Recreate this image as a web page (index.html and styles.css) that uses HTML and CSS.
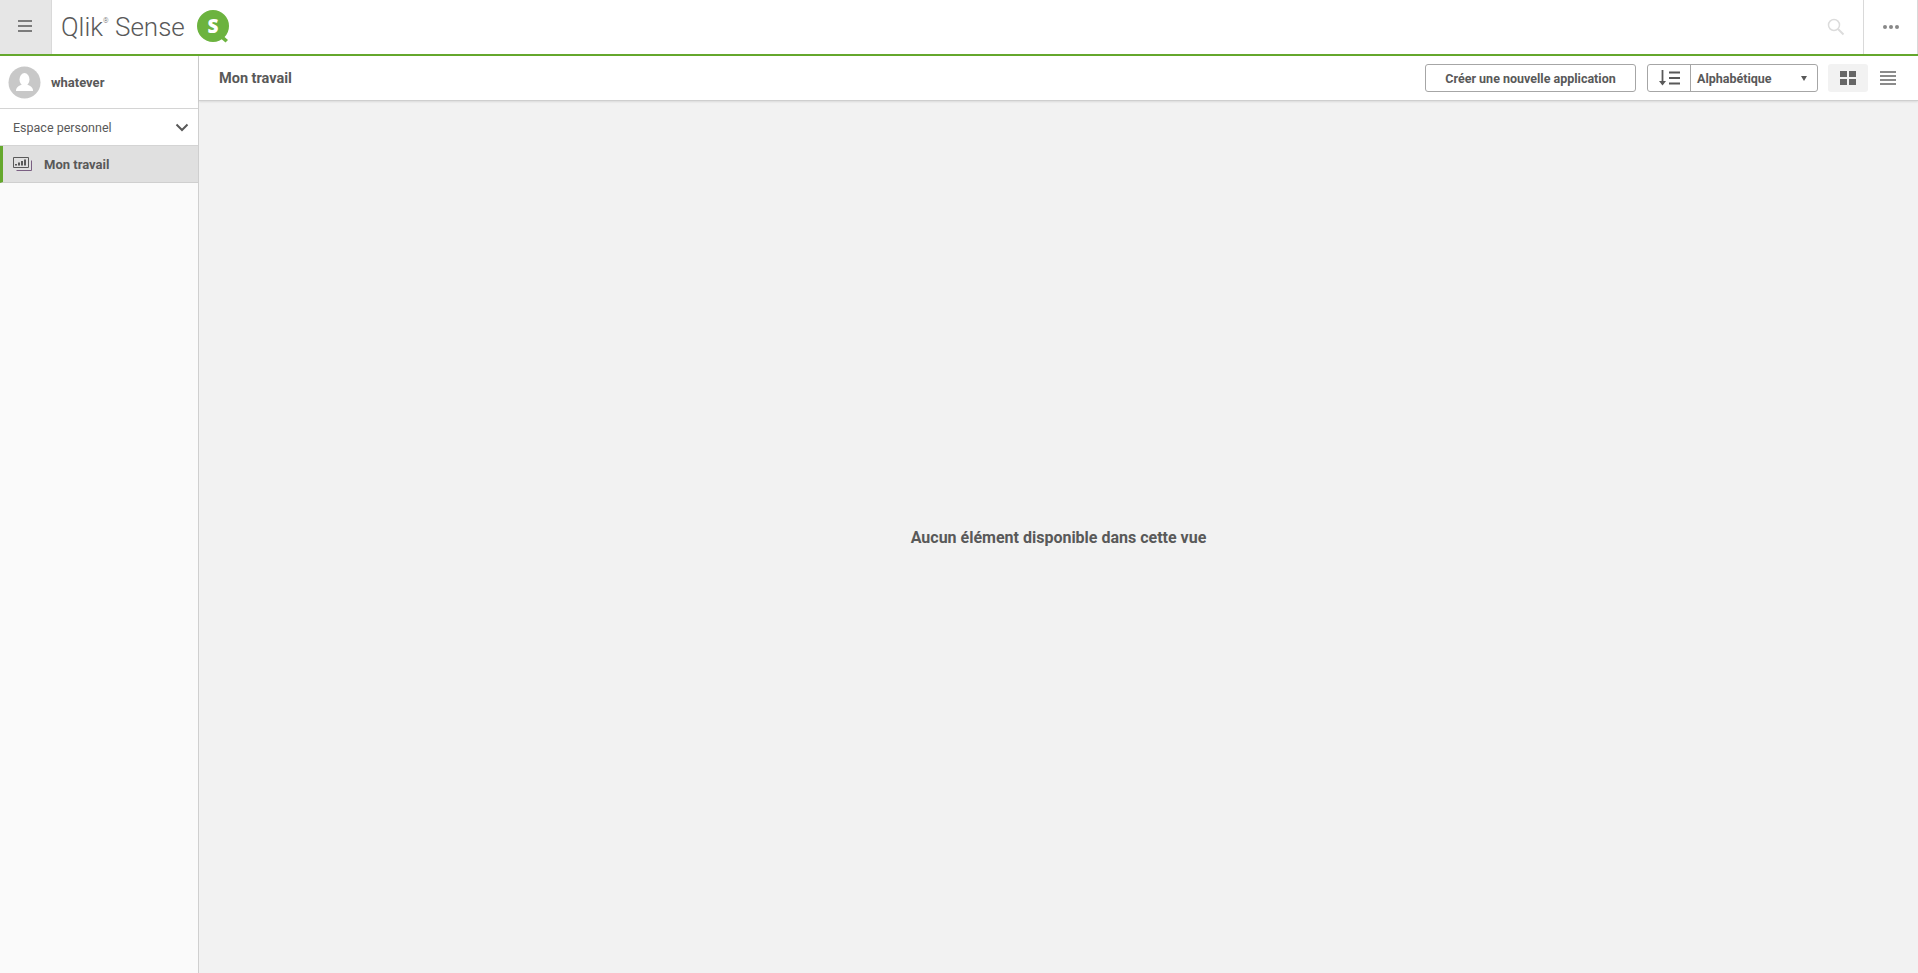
FILE: index.html
```html
<!DOCTYPE html>
<html lang="en">
<head>
  <meta charset="UTF-8">
  <title>Qlik Sense</title>
  <link rel="stylesheet" href="styles.css">
</head>
<body>

  <div class="header">
    <button class="menu-button">
      <svg width="14" height="12" viewBox="0 0 14 12"><path d="M0 1h14M0 6h14M0 11h14" stroke="#595959" stroke-width="1.6" fill="none"/></svg>
    </button>
    <div class="logo">
      <span class="logo-text">Qlik<sup>®</sup> Sense</span>
      <svg width="34" height="34" viewBox="0 0 34 34">
        <circle cx="16" cy="16" r="14" fill="none" stroke="#6cb33f" stroke-width="4"/>
        <circle cx="16" cy="16" r="13" fill="#6cb33f"/>
        <path d="M24 24l7 6-2.500 2.500-7-6z" fill="#6cb33f"/>
        <text x="16" y="22.500" class="logo-s">S</text>
      </svg>
    </div>
    <div class="header-right">
      <div class="search-icon">
        <svg width="18" height="18" viewBox="0 0 18 18"><circle cx="7" cy="7" r="5.500" fill="none" stroke="#dcdcdc" stroke-width="1.500"/><path d="M11 11l5.500 5.500" stroke="#dcdcdc" stroke-width="2"/></svg>
      </div>
      <div class="more-button">
        <span class="dot"></span><span class="dot"></span><span class="dot"></span>
      </div>
    </div>
  </div>

  <div class="main">
    <div class="sidebar">
      <div class="user-row">
        <svg width="33" height="33" viewBox="0 0 33 33">
          <circle cx="16.500" cy="16.500" r="16" fill="#c8c8c8"/>
          <ellipse cx="16.500" cy="13.500" rx="5" ry="6.500" fill="#fff"/>
          <path d="M8 25c0-4 3-5.500 6-6.500h5c3 1 6 2.500 6 6.500z" fill="#fff"/>
        </svg>
        <span class="user-name">whatever</span>
      </div>
      <div class="space-select">
        <span>Espace personnel</span>
        <svg width="14" height="9" viewBox="0 0 14 9"><path d="M1.500 1.500L7 7l5.500-5.500" fill="none" stroke="#595959" stroke-width="2"/></svg>
      </div>
      <div class="side-item">
        <svg width="19" height="14" viewBox="0 0 19 14">
          <path d="M.5.5h15v10H.5z" fill="none" stroke="#595959"/>
          <path d="M3.500 13.500h15v-10" fill="none" stroke="#7a5f82"/>
          <path d="M3 8.500V7M6 8.500V5.500M9 8.500V4M12 8.500V2.500" stroke="#595959" stroke-width="2"/>
        </svg>
        <span>Mon travail</span>
      </div>
    </div>

    <div class="content">
      <div class="toolbar">
        <div class="toolbar-title">Mon travail</div>
        <div class="toolbar-actions">
          <button class="create-button">Créer une nouvelle application</button>
          <div class="sort-box">
            <div class="sort-icon">
              <svg width="22" height="16" viewBox="0 0 22 16">
                <path d="M4.500 0v14" stroke="#595959" stroke-width="1.800"/>
                <path d="M1 11l3.500 4.500L8 11z" fill="#595959"/>
                <path d="M11 2.500h11M11 8h11M11 13.500h11" stroke="#595959" stroke-width="2"/>
              </svg>
            </div>
            <div class="sort-value">
              <span>Alphabétique</span>
              <span class="caret"></span>
            </div>
          </div>
          <div class="view-toggle">
            <div class="view-button active">
              <svg width="16" height="14" viewBox="0 0 16 14"><path d="M0 0h7v6H0zM9 0h7v6H9zM0 8h7v6H0zM9 8h7v6H9z" fill="#666"/></svg>
            </div>
            <div class="view-button">
              <svg width="16" height="14" viewBox="0 0 16 14"><path d="M0 1h16M0 5h16M0 9h16M0 13h16" stroke="#666" stroke-width="1.300"/></svg>
            </div>
          </div>
        </div>
      </div>
      <div class="empty-view">Aucun élément disponible dans cette vue</div>
    </div>
  </div>

</body>
</html>
```

FILE: styles.css
```css
html, body {
  height: 100%;
}

body {
  margin: 0;
  display: flex;
  flex-direction: column;
  overflow: hidden;
  font-family: Roboto, 'Noto Sans', sans-serif;
  color: #595959;
  background-color: #fff;
}

.header {
  display: flex;
  align-items: stretch;
  height: 54px;
  flex-shrink: 0;
  border-bottom: 2px solid #65a82d;
  background-color: #fff;
}

.menu-button {
  width: 52px;
  padding: 0 2px 0 0;
  border: none;
  border-right: 1px solid #d9d9d9;
  background-color: #e6e6e6;
}

.logo {
  display: flex;
  align-items: center;
  gap: 12px;
  margin-left: 9px;
}

.logo-text {
  font-family: Roboto, sans-serif;
  font-weight: 300;
  font-size: 26px;
  color: #595959;
}

.logo-text sup {
  font-size: 7px;
  vertical-align: 13px;
  line-height: 0;
}

.logo-s {
  font-family: 'Open Sans', sans-serif;
  font-weight: 800;
  font-size: 19px;
  fill: #fff;
  text-anchor: middle;
}

.header-right {
  display: flex;
  align-items: stretch;
  margin-left: auto;
}

.search-icon {
  display: flex;
  align-items: center;
  margin-right: 18px;
}

.more-button {
  display: flex;
  align-items: center;
  justify-content: center;
  gap: 2px;
  width: 52px;
  border-left: 1px solid #d9d9d9;
  border-right: 1px solid #d9d9d9;
  padding-left: 1px;
}

.dot {
  width: 4px;
  height: 4px;
  border-radius: 50%;
  background-color: #888;
}

.main {
  display: flex;
  flex: 1;
  min-height: 0;
}

.sidebar {
  width: 198px;
  flex-shrink: 0;
  border-right: 1px solid #cfcfcf;
  background-color: #fafafa;
}

.user-row {
  display: flex;
  align-items: center;
  gap: 10px;
  height: 52px;
  padding-left: 8px;
  background-color: #fff;
  border-bottom: 1px solid #d4d4d4;
}

.user-name {
  font-size: 13px;
  font-weight: 700;
}

.space-select {
  display: flex;
  align-items: center;
  justify-content: space-between;
  height: 36px;
  padding: 0 9px 0 13px;
  font-size: 12.500px;
  background-color: #fff;
  border-bottom: 1px solid #d4d4d4;
}

.side-item {
  display: flex;
  align-items: center;
  gap: 12px;
  height: 36px;
  padding-left: 10px;
  border-left: 3px solid #65a82d;
  border-bottom: 1px solid #cfcfcf;
  background-color: #e0e0e0;
  font-size: 13px;
  font-weight: 700;
}

.content {
  display: flex;
  flex-direction: column;
  flex: 1;
  min-width: 0;
  background-color: #f2f2f2;
}

.toolbar {
  display: flex;
  align-items: center;
  justify-content: space-between;
  height: 44px;
  padding: 0 10px 0 20px;
  flex-shrink: 0;
  background-color: #fff;
  border-bottom: 1px solid #cfcfcf;
  box-shadow: 0 1px 2px rgba(0, 0, 0, 0.1);
}

.toolbar-title {
  font-size: 14.500px;
  font-weight: 700;
}

.toolbar-actions {
  display: flex;
  align-items: center;
}

.create-button {
  width: 211px;
  height: 28px;
  padding: 0;
  border: 1px solid #a6a6a6;
  border-radius: 3px;
  background-color: #fff;
  font-family: inherit;
  font-size: 12.500px;
  font-weight: 700;
  color: #595959;
}

.sort-box {
  display: flex;
  width: 171px;
  height: 28px;
  box-sizing: border-box;
  margin-left: 11px;
  border: 1px solid #a6a6a6;
  border-radius: 3px;
}

.sort-icon {
  display: flex;
  align-items: center;
  justify-content: center;
  width: 42px;
  border-right: 1px solid #a6a6a6;
}

.sort-value {
  display: flex;
  align-items: center;
  justify-content: space-between;
  flex: 1;
  padding: 0 10px 0 6px;
  font-size: 12.500px;
  font-weight: 700;
}

.caret {
  width: 0;
  height: 0;
  border-left: 3.500px solid transparent;
  border-right: 3.500px solid transparent;
  border-top: 5px solid #595959;
}

.view-toggle {
  display: flex;
  margin-left: 10px;
}

.view-button {
  display: flex;
  align-items: center;
  justify-content: center;
  width: 40px;
  height: 28px;
  border-radius: 3px;
}

.view-button.active {
  background-color: #f2f2f2;
}

.empty-view {
  display: flex;
  flex: 1;
  align-items: center;
  justify-content: center;
  font-size: 16px;
  font-weight: 700;
}
```
